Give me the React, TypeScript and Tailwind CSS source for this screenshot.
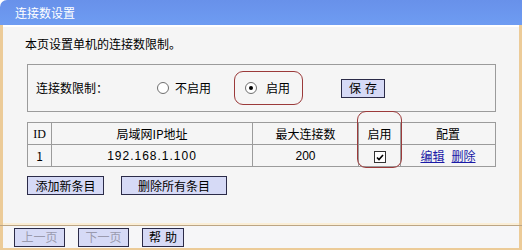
const cjk = '"Noto Sans CJK SC", "Liberation Sans", sans-serif';

function Radio({ checked }: { checked?: boolean }) {
  return (
    <span className="relative inline-block h-[12px] w-[12px] rounded-full border border-[#6f6f6f] bg-white">
      {checked && (
        <span className="absolute left-[3px] top-[3px] h-[4px] w-[4px] rounded-full bg-black" />
      )}
    </span>
  );
}

function Btn({ children, disabled, className = '' }: { children: React.ReactNode; disabled?: boolean; className?: string }) {
  return (
    <div
      className={`flex h-[19px] items-center justify-center border border-[#2b2b48] bg-[#d6daf6] text-[12px] leading-none ${
        disabled ? 'text-[#9a9aae]' : 'text-black'
      } ${className}`}
    >
      {children}
    </div>
  );
}

export default function App() {
  return (
    <div className="relative h-[250px] w-[522px] bg-white text-black" style={{ fontFamily: cjk }}>
      {/* title bar */}
      <div className="flex h-[25px] items-center rounded-tl-[7px] bg-gradient-to-b from-[#6891ea] to-[#6e9cf2] pl-[15px] text-[12px] text-white">
        连接数设置
      </div>
      <div className="h-[2px] border-l-[3px] border-r-[3px] border-[#eccb98] bg-white" />

      {/* body */}
      <div className="flex h-[196px] flex-col border-l-[3px] border-r-[3px] border-[#eccb98] bg-[#f5f5f5] pl-[24px]">
        <div className="mt-[10px] ml-[-2px] text-[12px] leading-[14px]">本页设置单机的连接数限制。</div>

        <div className="mt-[13px] flex h-[48px] w-[469px] items-center border border-[#9b9b9b] text-[12px]">
          <span className="ml-[8px] w-[121px]">连接数限制：</span>
          <Radio />
          <span className="ml-[6px]">不启用</span>
          <div className="ml-[23px] flex h-[34px] w-[69px] items-center rounded-[9px] border border-[#9b3a3a] pl-[10px]">
            <Radio checked />
            <span className="ml-[9px]">启用</span>
          </div>
          <Btn className="ml-[38px] w-[44px] tracking-[4px] pl-[4px]">保存</Btn>
        </div>

        <table className="mt-[10px] w-[469px] border-collapse text-center text-[12px]">
          <tbody>
            <tr className="h-[22px]">
              <td className="w-[24px] border border-[#9b9b9b]" style={{ fontFamily: '"Liberation Serif", serif' }}>ID</td>
              <td className="w-[201px] border border-[#9b9b9b]">局域网IP地址</td>
              <td className="w-[106px] border border-[#9b9b9b]">最大连接数</td>
              <td className="w-[42px] border border-[#9b9b9b]">启用</td>
              <td className="border border-[#9b9b9b]">配置</td>
            </tr>
            <tr className="h-[22px]">
              <td className="border border-[#9b9b9b]">1</td>
              <td className="border border-[#9b9b9b] tracking-[1px]" style={{ fontFamily: '"Liberation Sans", sans-serif' }}>192.168.1.100</td>
              <td className="border border-[#9b9b9b]" style={{ fontFamily: '"Liberation Sans", sans-serif' }}>200</td>
              <td className="border border-[#9b9b9b]">
                <span className="inline-flex h-[12px] w-[12px] items-center justify-center border border-[#333] bg-white align-middle">
                  <svg width="8" height="7" viewBox="0 0 8 7">
                    <path d="M1 3.5 L3 5.5 L7 1" stroke="#000" strokeWidth="1.6" fill="none" />
                  </svg>
                </span>
              </td>
              <td className="border border-[#9b9b9b]">
                <span className="text-[#1a1aa6] underline">编辑</span>
                <span className="ml-[7px] text-[#1a1aa6] underline">删除</span>
              </td>
            </tr>
          </tbody>
        </table>

        <div className="mt-[9px] flex gap-[17px]">
          <Btn className="w-[77px]">添加新条目</Btn>
          <Btn className="w-[106px]">删除所有条目</Btn>
        </div>
      </div>

      {/* separator */}
      <div className="h-[2px] border-l-[3px] border-r-[3px] border-[#eccb98] bg-[#fbeed6]" />
      <div className="h-[1px] bg-[#bba585]" />

      {/* footer */}
      <div className="flex h-[24px] items-center gap-[13px] border-b-[2px] border-l-[3px] border-r-[3px] border-[#eccb98] bg-[#f6f6f8] pl-[11px]">
        <Btn disabled className="w-[51px]">上一页</Btn>
        <Btn disabled className="w-[51px]">下一页</Btn>
        <Btn className="w-[42px] tracking-[4px] pl-[4px]">帮助</Btn>
      </div>

      {/* annotation around enable column */}
      <div className="absolute left-[357px] top-[111px] h-[57px] w-[45px] rounded-[9px] border border-[#9b3a3a]" />
    </div>
  );
}
